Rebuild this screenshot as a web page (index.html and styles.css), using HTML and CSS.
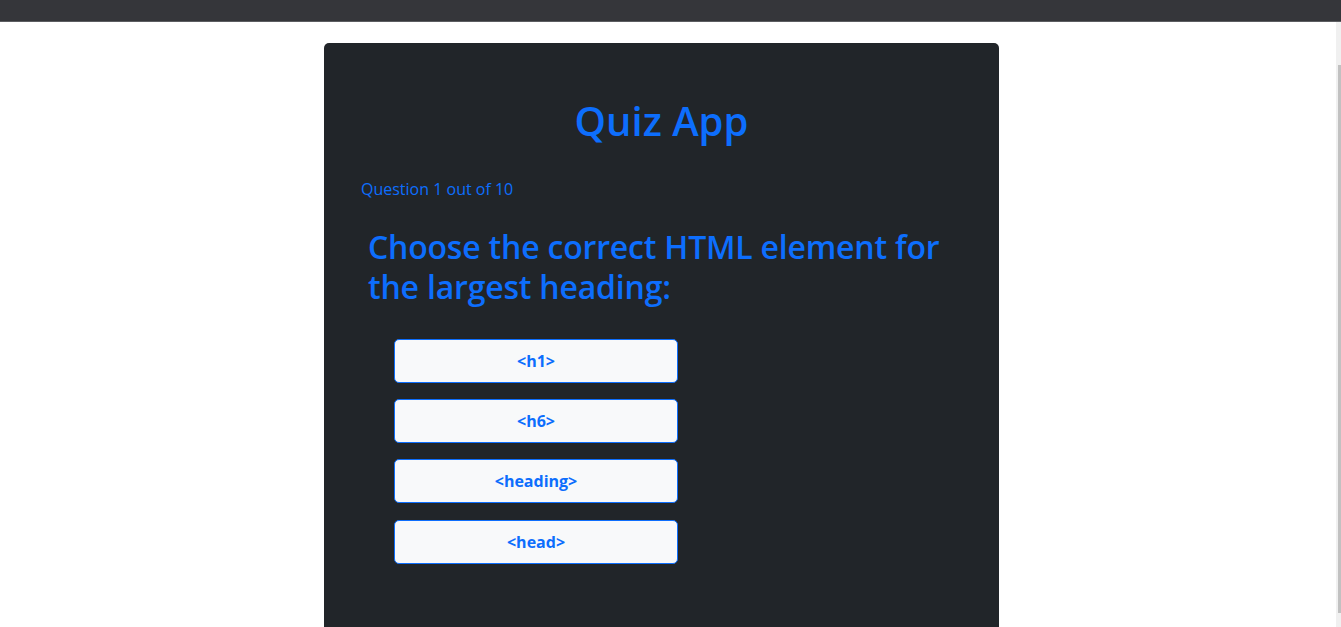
FILE: index.html
```html
<!DOCTYPE html>
<html lang="en">
<head>
<meta charset="utf-8">
<title>Quiz App</title>
<link rel="stylesheet" href="styles.css">
</head>
<body>
<div class="topbar"></div>
<main class="page">
  <section class="card">
    <h1 class="title">Quiz App</h1>
    <p class="counter">Question 1 out of 10</p>
    <h2 class="question">Choose the correct HTML element for the largest heading:</h2>
    <div class="options">
      <button class="option">&lt;h1&gt;</button>
      <button class="option">&lt;h6&gt;</button>
      <button class="option">&lt;heading&gt;</button>
      <button class="option">&lt;head&gt;</button>
    </div>
  </section>
</main>
<div class="scrollbar"><div class="thumb"></div></div>
</body>
</html>
```
FILE: styles.css
```css
html, body {
  margin: 0;
  padding: 0;
  background: #ffffff;
  overflow: hidden;
  height: 627px;
}
body {
  font-family: "Open Sans", "Noto Sans", sans-serif;
  color: #0d6efd;
}
.topbar {
  height: 21px;
  background: #35363a;
  border-bottom: 1px solid #5c5d61;
}
.page {
  padding: 21px 0 0 324px;
}
.card {
  width: 675px;
  height: 600px;
  box-sizing: border-box;
  background: #212529;
  border-radius: 5px;
  padding: 54px 0 0 37px;
}
.title {
  margin: 0;
  font-size: 40px;
  line-height: 48px;
  font-weight: 600;
  text-align: center;
  padding-right: 37px;
}
.counter {
  margin: 32px 0 0 0;
  font-size: 16px;
  line-height: 24px;
}
.question {
  margin: 26px 0 0 7px;
  width: 600px;
  font-size: 32px;
  line-height: 40px;
  font-weight: 600;
  letter-spacing: -0.2px;
}
.options {
  margin: 32px 0 0 33px;
  display: flex;
  flex-direction: column;
  gap: 16.2px;
}
.option {
  width: 284px;
  height: 44px;
  box-sizing: border-box;
  background: #f8f9fa;
  border: 1px solid #0d6efd;
  border-radius: 5px;
  color: #0d6efd;
  font-family: inherit;
  font-size: 16px;
  font-weight: 700;
}
.scrollbar {
  position: fixed;
  top: 22px;
  right: 0;
  bottom: 0;
  width: 5px;
  background: #f0f0f0;
}
.thumb {
  position: absolute;
  top: 43px;
  right: 0;
  width: 3px;
  height: 548px;
  background: #c1c1c1;
}
```
